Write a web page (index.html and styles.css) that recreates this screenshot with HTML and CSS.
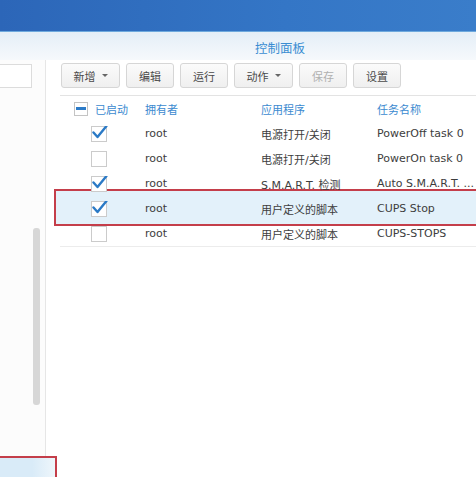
FILE: index.html
```html
<!DOCTYPE html>
<html lang="zh">
<head>
<meta charset="utf-8">
<link rel="stylesheet" href="styles.css">
</head>
<body>
<div class="topbar"></div>
<div class="titlebar"><span class="title">控制面板</span></div>
<div class="main">
  <aside class="sidebar">
    <div class="search"></div>
    <div class="scrollbar"></div>
  </aside>
  <section class="content">
    <div class="toolbar">
      <button class="btn menu">新增<span class="caret"></span></button>
      <button class="btn">编辑</button>
      <button class="btn">运行</button>
      <button class="btn menu">动作<span class="caret"></span></button>
      <button class="btn disabled">保存</button>
      <button class="btn">设置</button>
    </div>
    <div class="table">
      <div class="row head">
        <div class="cell c1"><span class="minus"></span>已启动</div>
        <div class="cell">拥有者</div>
        <div class="cell">应用程序</div>
        <div class="cell">任务名称</div>
      </div>
      <div class="row">
        <div class="cell c1"><svg class="cb" viewBox="0 0 18 18"><rect x="0.5" y="2.5" width="15" height="15" class="box"/><path d="M2.5 8.5 L6.5 13 L15.5 2" class="tick"/></svg></div>
        <div class="cell">root</div>
        <div class="cell">电源打开/关闭</div>
        <div class="cell">PowerOff task 0</div>
      </div>
      <div class="row">
        <div class="cell c1"><svg class="cb" viewBox="0 0 18 18"><rect x="0.5" y="2.5" width="15" height="15" class="box"/></svg></div>
        <div class="cell">root</div>
        <div class="cell">电源打开/关闭</div>
        <div class="cell">PowerOn task 0</div>
      </div>
      <div class="row">
        <div class="cell c1"><svg class="cb" viewBox="0 0 18 18"><rect x="0.5" y="2.5" width="15" height="15" class="box"/><path d="M2.5 8.5 L6.5 13 L15.5 2" class="tick"/></svg></div>
        <div class="cell">root</div>
        <div class="cell">S.M.A.R.T. 检测</div>
        <div class="cell">Auto S.M.A.R.T. ...</div>
      </div>
      <div class="row selected">
        <div class="cell c1"><svg class="cb" viewBox="0 0 18 18"><rect x="0.5" y="2.5" width="15" height="15" class="box"/><path d="M2.5 8.5 L6.5 13 L15.5 2" class="tick"/></svg></div>
        <div class="cell">root</div>
        <div class="cell">用户定义的脚本</div>
        <div class="cell">CUPS Stop</div>
      </div>
      <div class="row last">
        <div class="cell c1"><svg class="cb" viewBox="0 0 18 18"><rect x="0.5" y="2.5" width="15" height="15" class="box"/></svg></div>
        <div class="cell">root</div>
        <div class="cell">用户定义的脚本</div>
        <div class="cell">CUPS-STOPS</div>
      </div>
    </div>
  </section>
</div>
<div class="mark mark-row"></div>
<div class="mark mark-side"></div>
</body>
</html>
```

FILE: styles.css
```css
* { box-sizing: border-box; }
html, body {
  margin: 0;
  width: 476px;
  height: 477px;
  overflow: hidden;
  background: #ffffff;
}
body {
  position: relative;
  font-family: "DejaVu Sans", "Noto Sans CJK SC", sans-serif;
  font-size: 11px;
  color: #3d3d3d;
}
.topbar {
  height: 32px;
  background: linear-gradient(to right, #2c66b8, #3476c6 60%, #3a7dca);
  border-bottom: 1px solid #6ea9dd;
}
.titlebar {
  height: 28px;
  background: linear-gradient(#e4eef7, #f6f9fc);
  padding-left: 255px;
  display: flex;
  align-items: center;
}
.title {
  font-family: "Noto Sans CJK SC", sans-serif;
  font-size: 12.5px;
  color: #3a8dd2;
  padding-top: 2px;
}
.main {
  display: flex;
  height: 417px;
}
.sidebar {
  position: relative;
  width: 46px;
  flex: none;
  background: #fcfcfc;
  border-right: 1px solid #e6e6e6;
  padding-top: 4px;
}
.search {
  width: 32px;
  height: 24px;
  background: #fff;
  border: 1px solid #dcdcdc;
  border-left: none;
}
.scrollbar {
  position: absolute;
  left: 33px;
  top: 168px;
  width: 7px;
  height: 177px;
  border-radius: 3px;
  background: #d7d7d7;
}
.content {
  flex: 1;
  padding-left: 15px;
  padding-top: 3px;
  min-width: 0;
}
.toolbar {
  display: flex;
  gap: 6px;
}
.btn {
  width: 48px;
  height: 25px;
  padding: 0;
  font-family: "Noto Sans CJK SC", sans-serif;
  font-size: 11px;
  color: #4a4a4a;
  background: linear-gradient(#fbfbfb, #efefef);
  border: 1px solid #d6d6d6;
  border-radius: 3px;
  display: flex;
  align-items: center;
  justify-content: center;
}
.btn.menu { width: 59px; }
.btn.disabled { color: #b0b0b0; }
.caret {
  width: 0;
  height: 0;
  margin-left: 6px;
  border-left: 3px solid transparent;
  border-right: 3px solid transparent;
  border-top: 3px solid #666;
}
.table {
  position: relative;
  z-index: 1;
  margin-top: 7px;
  margin-left: -1px;
  border-top: 1px solid #e3e3e3;
}
.row {
  display: grid;
  grid-template-columns: 77px 116px 116px 1fr;
  height: 25px;
  align-items: center;
  white-space: nowrap;
}
.row.last { border-bottom: 1px solid #ececec; height: 26px; }
.cell {
  padding-left: 8px;
  overflow: hidden;
}
.c1 {
  padding-left: 31px;
  display: flex;
  align-items: center;
}
.head .cell {
  font-family: "Noto Sans CJK SC", sans-serif;
  color: #3b8ad0;
}
.head .c1 { padding-left: 14px; }
.minus {
  width: 14px;
  height: 14px;
  border: 1px solid #c4c4c4;
  background: #fff;
  margin-right: 7px;
  display: flex;
  align-items: center;
  justify-content: center;
}
.minus::after {
  content: "";
  width: 10px;
  height: 3px;
  background: #2c7bc8;
}
.cb {
  width: 18px;
  height: 18px;
  overflow: visible;
  margin-top: -2px;
}
.box { fill: #fff; stroke: #cbcbcb; stroke-width: 1; }
.tick { fill: none; stroke: #2b7ac6; stroke-width: 2.4; stroke-linecap: round; stroke-linejoin: round; }
.mark {
  position: absolute;
  border: 2px solid #c43e4a;
}
.mark-row {
  z-index: 0;
  left: 54px;
  top: 189px;
  width: 440px;
  height: 37px;
  background: #e3f1fa;
}
.mark-side {
  left: -4px;
  top: 456px;
  width: 61px;
  height: 40px;
  background: linear-gradient(to right, #d9ebf8 60%, #eef6fb);
}
```
